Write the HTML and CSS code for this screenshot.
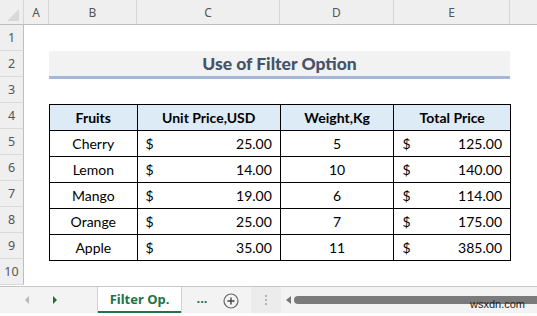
FILE: index.html
```html
<!DOCTYPE html>
<html lang="en">
<head>
    <meta charset="UTF-8">
    <title>Use of Filter Option</title>
    <link rel="stylesheet" href="styles.css">
</head>
<body>
    <div class="sheet">
        <div class="corner"><span class="select-all"></span></div>
        <div class="colhead">A</div>
        <div class="colhead">B</div>
        <div class="colhead">C</div>
        <div class="colhead">D</div>
        <div class="colhead">E</div>
        <div class="colhead last"></div>

        <div class="rowhead r1">1</div>
        <div class="rowhead r2">2</div>
        <div class="rowhead r3">3</div>
        <div class="rowhead r4">4</div>
        <div class="rowhead r5">5</div>
        <div class="rowhead r6">6</div>
        <div class="rowhead r7">7</div>
        <div class="rowhead r8">8</div>
        <div class="rowhead r9">9</div>
        <div class="rowhead r10">10</div>

        <div class="title">Use of Filter Option</div>

        <table class="data">
            <tr class="head">
                <th>Fruits</th>
                <th>Unit Price,USD</th>
                <th>Weight,Kg</th>
                <th>Total Price</th>
            </tr>
            <tr>
                <td class="center">Cherry</td>
                <td><span class="money"><span>$</span><span>25.00</span></span></td>
                <td class="center">5</td>
                <td><span class="money"><span>$</span><span>125.00</span></span></td>
            </tr>
            <tr>
                <td class="center">Lemon</td>
                <td><span class="money"><span>$</span><span>14.00</span></span></td>
                <td class="center">10</td>
                <td><span class="money"><span>$</span><span>140.00</span></span></td>
            </tr>
            <tr>
                <td class="center">Mango</td>
                <td><span class="money"><span>$</span><span>19.00</span></span></td>
                <td class="center">6</td>
                <td><span class="money"><span>$</span><span>114.00</span></span></td>
            </tr>
            <tr>
                <td class="center">Orange</td>
                <td><span class="money"><span>$</span><span>25.00</span></span></td>
                <td class="center">7</td>
                <td><span class="money"><span>$</span><span>175.00</span></span></td>
            </tr>
            <tr>
                <td class="center">Apple</td>
                <td><span class="money"><span>$</span><span>35.00</span></span></td>
                <td class="center">11</td>
                <td><span class="money"><span>$</span><span>385.00</span></span></td>
            </tr>
        </table>
    </div>

    <div class="tabbar">
        <div class="nav">
            <span class="arrow-left"></span>
            <span class="arrow-right"></span>
        </div>
        <div class="tab">Filter Op.</div>
        <div class="more">...</div>
        <div class="add">
            <svg width="16" height="16" viewBox="0 0 16 16">
                <circle cx="8" cy="8" r="7" fill="none" stroke="#666" stroke-width="1.2"/>
                <path d="M8 4.5v7M4.5 8h7" stroke="#444" stroke-width="1.4"/>
            </svg>
        </div>
        <div class="grip"><span></span><span></span><span></span></div>
        <div class="scroll">
            <span class="scroll-left"></span>
            <span class="thumb"></span>
        </div>
        <span class="mark">wsxdn.com</span>
    </div>
</body>
</html>
```

FILE: styles.css
```css
body {
    margin: 0;
    width: 537px;
    height: 316px;
    overflow: hidden;
    background: #fff;
    font-family: Lato, "Open Sans", sans-serif;
}

.sheet {
    display: grid;
    grid-template-columns: 24px 25px 88px 143px 114px 116px 1fr;
    grid-template-rows: 25px repeat(10, 26px);
    height: 286px;
    overflow: hidden;
}

.corner {
    background: #efefef;
    border-right: 1px solid #d6d6d6;
    border-bottom: 1px solid #bdbdbd;
    position: relative;
}
.select-all {
    position: absolute;
    right: 4px;
    bottom: 3px;
    width: 0;
    height: 0;
    border-left: 12px solid transparent;
    border-bottom: 12px solid #d9d9d9;
}

.colhead {
    background: #efefef;
    border-right: 1px solid #d6d6d6;
    border-bottom: 1px solid #bdbdbd;
    color: #555;
    font-family: "Noto Sans", sans-serif;
    font-size: 12px;
    display: flex;
    align-items: center;
    justify-content: center;
}
.colhead.last {
    border-right: none;
}

.rowhead {
    grid-column: 1;
    background: #efefef;
    border-right: 1px solid #bdbdbd;
    border-bottom: 1px solid #d9d9d9;
    color: #555;
    font-family: "Noto Sans", sans-serif;
    font-size: 12.5px;
    display: flex;
    align-items: center;
    justify-content: center;
}
.r1 { grid-row: 2; }
.r2 { grid-row: 3; }
.r3 { grid-row: 4; }
.r4 { grid-row: 5; }
.r5 { grid-row: 6; }
.r6 { grid-row: 7; }
.r7 { grid-row: 8; }
.r8 { grid-row: 9; }
.r9 { grid-row: 10; }
.r10 { grid-row: 11; }

.title {
    grid-column: 3 / 7;
    grid-row: 3;
    align-self: start;
    height: 25px;
    background: #f2f2f2;
    border-bottom: 3px solid #a4b6d9;
    color: #44546a;
    font-weight: 900;
    font-size: 17.5px;
    display: flex;
    align-items: center;
    justify-content: center;
}

.data {
    grid-column: 3 / 7;
    grid-row: 5 / 11;
    align-self: start;
    margin-top: 1px;
    border-collapse: collapse;
    width: 462px;
    font-size: 14px;
    color: #000;
}
.data th,
.data td {
    border: 1px solid #000;
    height: 25px;
    padding: 0;
    font-weight: normal;
}
.data th {
    background: #ddebf7;
    font-weight: bold;
    text-align: center;
}
.data th:nth-child(1) { width: 87px; }
.data th:nth-child(2) { width: 143px; }
.data th:nth-child(3) { width: 113px; }
.data th:nth-child(4) { width: 116px; }
.center {
    text-align: center;
}
.money {
    display: flex;
    justify-content: space-between;
    padding: 0 8px;
}

.tabbar {
    height: 26px;
    border-top: 1px solid #c6c6c6;
    background: #f3f3f3;
    display: flex;
    align-items: center;
    position: relative;
    font-family: "Noto Sans", sans-serif;
}
.nav {
    width: 98px;
    display: flex;
    align-items: center;
    height: 100%;
}
.arrow-left {
    margin-left: 25px;
    width: 0;
    height: 0;
    border-top: 4px solid transparent;
    border-bottom: 4px solid transparent;
    border-right: 4px solid #b8b8b8;
}
.arrow-right {
    margin-left: 24px;
    width: 0;
    height: 0;
    border-top: 4px solid transparent;
    border-bottom: 4px solid transparent;
    border-left: 4px solid #1e6b3c;
}
.tab {
    width: 83px;
    height: 24px;
    align-self: flex-start;
    background: #fff;
    border-bottom: 2px solid #217346;
    color: #217346;
    font-weight: bold;
    font-size: 13px;
    display: flex;
    align-items: center;
    justify-content: center;
    box-shadow: 1px 0 0 #d0d0d0, -1px 0 0 #d0d0d0;
}
.more {
    width: 42px;
    text-align: center;
    color: #217346;
    font-weight: bold;
    font-size: 13px;
    line-height: 1;
    padding-bottom: 4px;
}
.add {
    width: 16px;
    height: 16px;
}
.grip {
    margin-left: 12px;
    width: 30px;
    height: 100%;
    background: #ececec;
    display: flex;
    flex-direction: column;
    align-items: center;
    justify-content: center;
    gap: 2px;
}
.grip span {
    width: 2px;
    height: 2px;
    background: #b5b5b5;
}
.scroll {
    flex: 1;
    display: flex;
    align-items: center;
    height: 100%;
}
.scroll-left {
    margin-left: 5px;
    width: 0;
    height: 0;
    border-top: 4px solid transparent;
    border-bottom: 4px solid transparent;
    border-right: 5px solid #777;
}
.thumb {
    margin-left: 3px;
    flex: 1;
    height: 8px;
    background: #7b7b7b;
    border-radius: 4px 0 0 4px;
}
.mark {
    position: absolute;
    right: 12px;
    top: 11px;
    font-family: "Liberation Sans", sans-serif;
    font-size: 11px;
    color: #222;
}
```
